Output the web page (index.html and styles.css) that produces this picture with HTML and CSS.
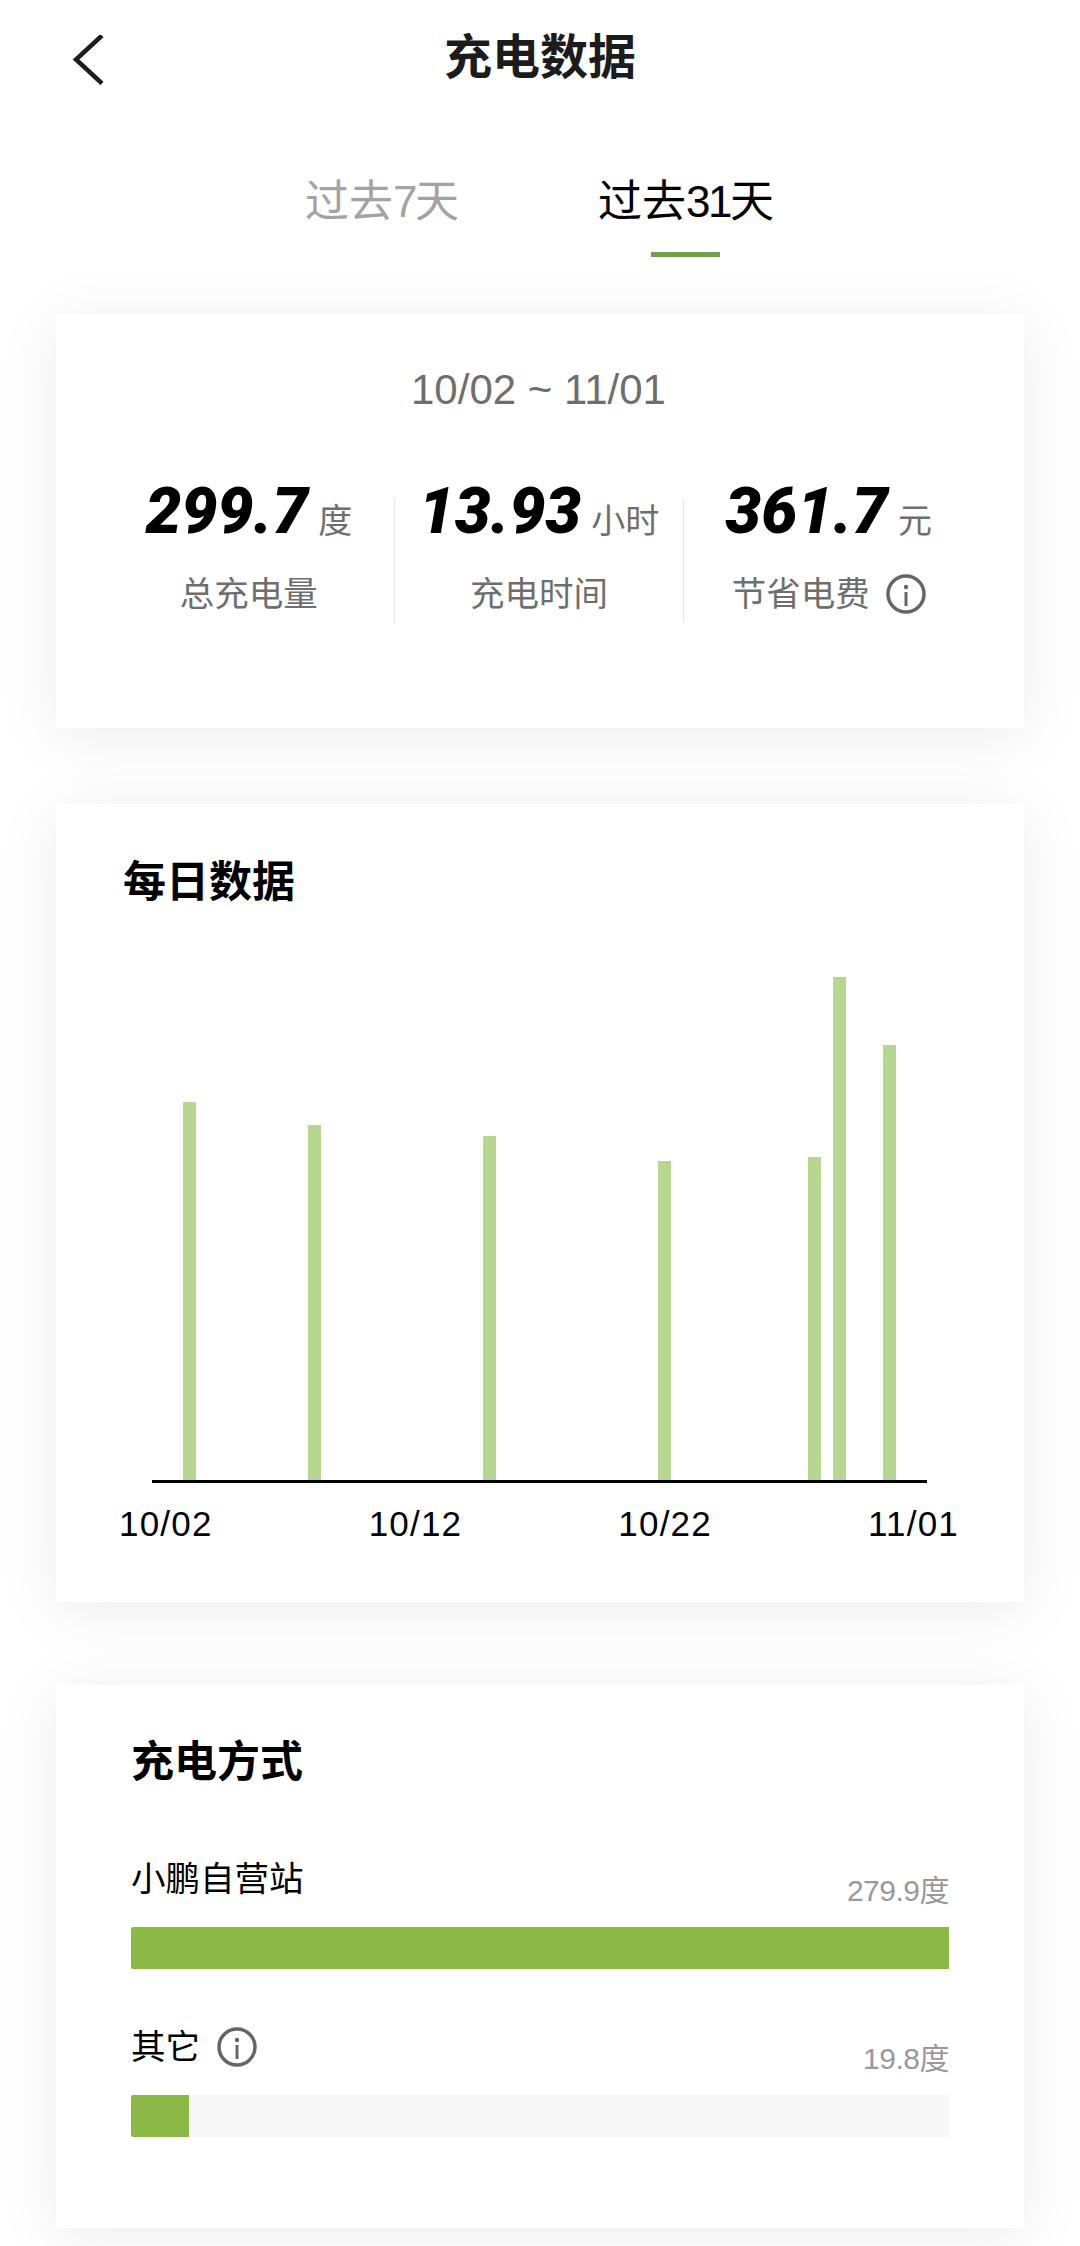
FILE: index.html
```html
<!DOCTYPE html>
<html lang="zh-CN">
<head>
  <meta charset="UTF-8">
  <title>充电数据</title>
  <link rel="stylesheet" href="styles.css">
</head>
<body>

  <header class="topbar">
    <svg class="back" width="32" height="50" viewBox="0 0 32 50"><path d="M30 .5 4 24.500l26 24" fill="none" stroke="#1c1c1c" stroke-width="4.500"/></svg>
    <h1>充电数据</h1>
  </header>

  <nav class="tabs">
    <div class="tab">过去<span class="num">7</span>天</div>
    <div class="tab active">过去<span class="num">31</span>天</div>
  </nav>

  <section class="card summary">
    <div class="range">10/02 ~ 11/01</div>
    <div class="stats">
      <div class="stat">
        <div class="stat-value"><b>299.7</b><span>度</span></div>
        <div class="stat-label">总充电量</div>
      </div>
      <div class="stat">
        <div class="stat-value"><b>13.93</b><span>小时</span></div>
        <div class="stat-label">充电时间</div>
      </div>
      <div class="stat">
        <div class="stat-value"><b>361.7</b><span>元</span></div>
        <div class="stat-label">节省电费
          <svg class="info" width="40" height="40" viewBox="0 0 40 40"><circle cx="20" cy="20" r="18" fill="none" stroke="#666" stroke-width="3.500"/><path d="M20 18v14" stroke="#666" stroke-width="3"/><circle cx="20" cy="13" r="2.200" fill="#666"/></svg>
        </div>
      </div>
    </div>
  </section>

  <section class="card daily">
    <h2>每日数据</h2>
    <div class="plot">
      <div class="day"></div>
      <div class="day"><i style="height:378px"></i></div>
      <div class="day"></div><div class="day"></div><div class="day"></div><div class="day"></div>
      <div class="day"><i style="height:355px"></i></div>
      <div class="day"></div><div class="day"></div><div class="day"></div><div class="day"></div><div class="day"></div><div class="day"></div>
      <div class="day"><i style="height:344px"></i></div>
      <div class="day"></div><div class="day"></div><div class="day"></div><div class="day"></div><div class="day"></div><div class="day"></div>
      <div class="day"><i style="height:319px"></i></div>
      <div class="day"></div><div class="day"></div><div class="day"></div><div class="day"></div><div class="day"></div>
      <div class="day"><i style="height:323px"></i></div>
      <div class="day"><i style="height:503px"></i></div>
      <div class="day"></div>
      <div class="day"><i style="height:435px"></i></div>
      <div class="day"></div>
    </div>
    <div class="dates">
      <span>10/02</span>
      <span>10/12</span>
      <span>10/22</span>
      <span>11/01</span>
    </div>
  </section>

  <section class="card methods">
    <h2>充电方式</h2>
    <div class="method">
      <div class="method-head">
        <span class="method-name">小鹏自营站</span>
        <span class="method-value">279.9度</span>
      </div>
      <div class="track"><div class="fill" style="width:100%"></div></div>
    </div>
    <div class="method">
      <div class="method-head">
        <span class="method-name">其它
          <svg class="info" width="40" height="40" viewBox="0 0 40 40"><circle cx="20" cy="20" r="18" fill="none" stroke="#666" stroke-width="3.500"/><path d="M20 18v14" stroke="#666" stroke-width="3"/><circle cx="20" cy="13" r="2.200" fill="#666"/></svg>
        </span>
        <span class="method-value">19.8度</span>
      </div>
      <div class="track"><div class="fill" style="width:7.1%"></div></div>
    </div>
  </section>

</body>
</html>
```

FILE: styles.css
```css
* {
  box-sizing: border-box;
}
body {
  margin: 0;
  height: 2246px;
  overflow: hidden;
  background-color: #fff;
  color: #000;
  font-family: 'Liberation Sans', 'Noto Sans CJK SC', sans-serif;
}
h1, h2 {
  margin: 0;
  font-weight: 700;
}

.topbar {
  position: relative;
  height: 115px;
  padding-top: 30px;
  text-align: center;
}
.topbar h1 {
  font-size: 48px;
  line-height: 56px;
  color: #1c1c1c;
}
.back {
  position: absolute;
  left: 72px;
  top: 35px;
}

.tabs {
  display: flex;
  height: 142px;
  padding-left: 305px;
  gap: 139px;
}
.tab {
  position: relative;
  height: 142px;
  padding-top: 57px;
  font-size: 44px;
  line-height: 60px;
  color: #a3a3a3;
}
.tab .num {
  letter-spacing: -2.5px;
}
.tab.active {
  color: #000;
}
.tab.active::after {
  content: '';
  position: absolute;
  left: 0;
  right: 0;
  top: 137px;
  width: 69px;
  height: 5px;
  margin: 0 auto;
  background-color: #72a04a;
}

.card {
  margin: 57px 56px 0;
  background-color: #fff;
  box-shadow: 0 8px 60px rgba(0, 0, 0, 0.08);
}

.summary {
  height: 414px;
  padding: 52px 51px 0 48px;
}
.range {
  text-align: center;
  font-size: 42px;
  line-height: 48px;
  color: #6e6e6e;
}
.stats {
  display: grid;
  grid-template-columns: repeat(3, 1fr);
  margin-top: 85px;
}
.stat {
  height: 123px;
  text-align: center;
  border-left: 1px solid #e4e4e4;
}
.stat:first-child {
  border-left: none;
}
.stat-value {
  display: flex;
  justify-content: center;
  align-items: baseline;
  gap: 10px;
  margin-top: -24px;
  height: 74px;
  line-height: 74px;
  white-space: nowrap;
}
.stat-value b {
  font-family: Roboto, sans-serif;
  font-size: 64px;
  font-weight: 900;
  font-style: italic;
}
.stat-value span {
  font-size: 34px;
  color: #6e6e6e;
}
.stat-label {
  display: flex;
  justify-content: center;
  align-items: center;
  gap: 16px;
  margin-top: 25px;
  font-size: 34.500px;
  line-height: 40px;
  color: #6e6e6e;
}

.daily {
  height: 798px;
  margin-top: 76px;
  padding: 52px 0 0 67px;
}
.daily h2 {
  font-size: 43px;
  line-height: 52px;
}
.plot {
  display: grid;
  grid-template-columns: repeat(31, 1fr);
  width: 775px;
  height: 575px;
  margin-left: 29px;
  border-bottom: 3px solid #000;
}
.day {
  display: flex;
  justify-content: center;
  align-items: flex-end;
}
.day i {
  display: block;
  width: 13px;
  background-color: #b7d68f;
}
.dates {
  display: flex;
  justify-content: space-between;
  width: 840px;
  margin: 19px 0 0 -4px;
  font-size: 35px;
  letter-spacing: 1.200px;
  line-height: 44px;
}

.methods {
  height: 543px;
  margin-top: 83px;
  padding: 51px 75px 0 75px;
}
.methods h2 {
  font-size: 43px;
  line-height: 52px;
}
.method {
  margin-top: 68px;
}
.method + .method {
  margin-top: 55px;
}
.method-head {
  display: flex;
  justify-content: space-between;
  align-items: flex-end;
  height: 71px;
  padding-bottom: 27px;
}
.method-name {
  display: flex;
  align-items: center;
  gap: 17px;
  font-size: 34.500px;
  line-height: 42px;
}
.method-value {
  font-size: 30px;
  letter-spacing: -0.500px;
  line-height: 34px;
  margin-bottom: -8px;
  color: #999;
}
.track {
  height: 42px;
  background-color: #f7f7f7;
}
.fill {
  height: 100%;
  background-color: #8bb945;
  border-radius: 2px 0 0 2px;
}
```
